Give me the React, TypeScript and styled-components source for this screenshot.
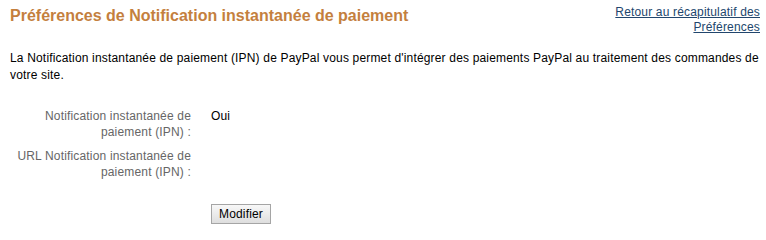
import React from "react";
import styled, { createGlobalStyle } from "styled-components";

const Global = createGlobalStyle`
  html, body { margin: 0; padding: 0; background: #fff; }
  body { font-family: "Liberation Sans", Arial, sans-serif; font-size: 12px; color: #000; letter-spacing: 0.17px; }
`;

const Page = styled.div`
  padding: 5px 6px 0 10px;
  width: 750px;
`;

const Header = styled.div`
  display: flex;
  justify-content: space-between;
  align-items: flex-start;
`;

const Title = styled.h1`
  margin: 1px 0 0 0;
  font-size: 16px;
  font-weight: bold;
  color: #c47f3e;
  line-height: 20px;
  letter-spacing: 0;
`;

const BackLink = styled.a`
  flex: 0 0 155px;
  text-align: right;
  color: #22466d;
  text-decoration: underline;
  font-size: 12px;
  line-height: 15px;
  cursor: pointer;
`;

const Intro = styled.p`
  margin: 15px 0 0 0;
  line-height: 17px;
  color: #000;
`;

const Form = styled.div`
  display: grid;
  grid-template-columns: 181px 1fr;
  column-gap: 20px;
  row-gap: 8px;
  margin-top: 24px;
  line-height: 16px;
`;

const Label = styled.div`
  text-align: right;
  color: #666;
`;

const Value = styled.div`
  color: #000;
`;

const Actions = styled.div`
  grid-column: 2;
  margin-top: 16px;
`;

const Button = styled.button`
  font-family: "Liberation Sans", Arial, sans-serif;
  font-size: 12px;
  letter-spacing: 0.17px;
  color: #000;
  padding: 0 7px;
  height: 20px;
  background: linear-gradient(#f8f8f8, #dedede);
  border: 1px solid #a5a5a5;
  border-radius: 0;
`;

export default function App() {
  return (
    <>
      <Global />
      <Page>
        <Header>
          <Title>Préférences de Notification instantanée de paiement</Title>
          <BackLink>Retour au récapitulatif des Préférences</BackLink>
        </Header>
        <Intro>
          La Notification instantanée de paiement (IPN) de PayPal vous permet d'intégrer des paiements PayPal au traitement des commandes de votre site.
        </Intro>
        <Form>
          <Label>Notification instantanée de paiement (IPN) :</Label>
          <Value>Oui</Value>
          <Label>URL Notification instantanée de paiement (IPN) :</Label>
          <Value></Value>
          <Actions>
            <Button>Modifier</Button>
          </Actions>
        </Form>
      </Page>
    </>
  );
}
